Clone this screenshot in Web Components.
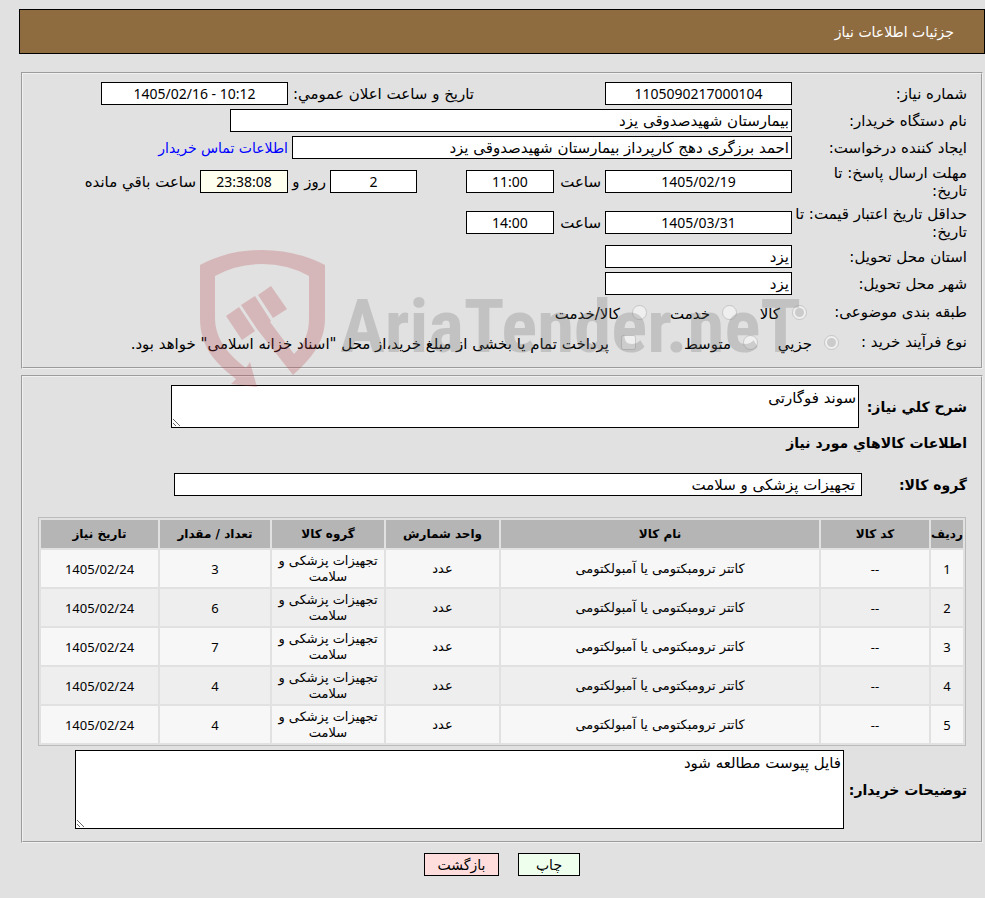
<!DOCTYPE html>
<html lang="fa" dir="rtl">
<head>
<meta charset="utf-8">
<title>جزئیات اطلاعات نیاز</title>
<style>
  body {
    margin: 0;
    background: #e1e1e1;
    color: #000;
    font: 15px/18px "DejaVu Sans", "Noto Sans", sans-serif;
  }
</style>
</head>
<body>
<need-page>
  <need-header>جزئیات اطلاعات نیاز</need-header>

  <need-panel>
    <need-row>
      <need-field label="شماره نیاز:" value="1105090217000104" number></need-field>
      <need-field label="تاریخ و ساعت اعلان عمومي:" value="1405/02/16 - 10:12" number inline style="--label: 182px; margin-right: 127px"></need-field>
    </need-row>
    <need-row>
      <need-field label="نام دستگاه خریدار:" value="بیمارستان شهیدصدوقی یزد" style="--box: 562px"></need-field>
    </need-row>
    <need-row>
      <need-field label="ایجاد کننده درخواست:" value="احمد برزگری دهج کارپرداز بیمارستان شهیدصدوقی یزد" style="--box: 500px"></need-field>
      <need-link href="#contact">اطلاعات تماس خریدار</need-link>
    </need-row>
    <need-row tall>
      <need-field label="مهلت ارسال پاسخ: تا&#10;تاریخ:" value="1405/02/19" number></need-field>
      <need-field label="ساعت" value="11:00" number inline style="--label: 43px; --box: 88px"></need-field>
      <need-field label="روز و" value="2" number inline after style="--label: 34px; --box: 87px; margin-right: 45px"></need-field>
      <need-field label="ساعت باقي مانده" value="23:38:08" number inline after style="--label: 114px; --box: 88px; --paper: #fffff0"></need-field>
    </need-row>
    <need-row tall>
      <need-field label="حداقل تاریخ اعتبار قیمت: تا&#10;تاریخ:" value="1405/03/31" number></need-field>
      <need-field label="ساعت" value="14:00" number inline style="--label: 43px; --box: 88px"></need-field>
    </need-row>
    <need-row>
      <need-field label="استان محل تحویل:" value="یزد"></need-field>
    </need-row>
    <need-row>
      <need-field label="شهر محل تحویل:" value="یزد"></need-field>
    </need-row>
    <need-choices label="طبقه بندی موضوعی:" style="--caption: 160px">
      <need-choice type="radio" label="کالا" checked style="--cell: 70px"></need-choice>
      <need-choice type="radio" label="خدمت" style="--cell: 90px"></need-choice>
      <need-choice type="radio" label="کالا/خدمت"></need-choice>
    </need-choices>
    <need-choices label="نوع فرآیند خرید :" style="--caption: 128px">
      <need-choice type="radio" label="جزيي" checked style="--cell: 81px"></need-choice>
      <need-choice type="radio" label="متوسط" style="--cell: 122px"></need-choice>
      <need-choice type="checkbox" label="پرداخت تمام یا بخشی از مبلغ خرید،از محل &quot;اسناد خزانه اسلامی&quot; خواهد بود."></need-choice>
    </need-choices>
  </need-panel>

  <need-panel>
    <need-note label="شرح کلي نیاز:" value="سوند فوگارتی" style="--label: 104px; --box: 688px; --height: 43px"></need-note>
    <need-title>اطلاعات کالاهاي مورد نیاز</need-title>
    <need-row>
      <need-field label="گروه کالا:" value="تجهیزات پزشکی و سلامت" strong style="--label: 105px; --box: 688px; --indent: 6px"></need-field>
    </need-row>
    <need-items></need-items>
    <need-note label="توضیحات خریدار:" value="فایل پیوست مطالعه شود" style="--label: 119px; --box: 769px; --height: 79px"></need-note>
  </need-panel>

  <need-actions>
    <need-button style="--fill: #eeffee; --width: 62px">چاپ</need-button>
    <need-button style="--fill: #ffdddd; --width: 75px">بازگشت</need-button>
  </need-actions>

  <need-watermark slot="mark"></need-watermark>
</need-page>

<script>
const base = `
  * { box-sizing: border-box; }
  input, textarea, button { font: inherit; color: inherit; margin: 0; }
`;

class NeedElement extends HTMLElement {
  constructor() {
    super();
    this.attachShadow({ mode: "open" });
  }

  connectedCallback() {
    this.shadowRoot.innerHTML = `<style>${base}${this.styles()}</style>${this.markup()}`;
  }

  attr(name) {
    return (this.getAttribute(name) || "").replace(/"/g, "&quot;");
  }

  markup() {
    return "<slot></slot>";
  }
}

customElements.define("need-page", class extends NeedElement {
  styles() {
    return `
      :host { display: block; position: relative; }
      main { padding: 9px 0 20px 19px; }
    `;
  }
  markup() {
    return `<main><slot></slot></main><slot name="mark"></slot>`;
  }
});

customElements.define("need-header", class extends NeedElement {
  styles() {
    return `
      :host { display: block; margin-bottom: 18px; font-size: 14px; }
      header {
        padding: 13px 30px 12px;
        border: 1px solid #000;
        background: #8f6c40;
        color: #fff;
      }
      h1 { margin: 0; font: inherit; }
    `;
  }
  markup() {
    return `<header><h1><slot></slot></h1></header>`;
  }
});

customElements.define("need-panel", class extends NeedElement {
  styles() {
    return `
      :host { display: block; margin: 0 2px 6px; }
      fieldset {
        display: flex;
        flex-direction: column;
        gap: 4px;
        min-width: 0;
        margin: 0;
        padding: 8px 14px 12px;
        border: 2px groove #f0f0f0;
      }
    `;
  }
  markup() {
    return `<fieldset><slot></slot></fieldset>`;
  }
});

customElements.define("need-row", class extends NeedElement {
  styles() {
    return `
      :host { display: flex; align-items: center; gap: 4px; min-height: 23px; }
      :host([tall]) { min-height: 37px; }
    `;
  }
});

// A caption tied to a read-only box; "after" puts the caption behind the box
customElements.define("need-field", class extends NeedElement {
  styles() {
    return `
      :host { display: flex; align-items: center; min-width: 0; }
      :host([inline]) { gap: 4px; }
      label { flex: none; width: var(--label, 175px); white-space: pre-line; }
      :host([inline]) label { white-space: nowrap; }
      :host([strong]) label { font-size: 14px; font-weight: bold; }
      input {
        width: var(--box, 187px);
        min-width: 0;
        height: 23px;
        padding: 0 2px;
        padding-right: var(--indent, 2px);
        border: 1px solid #000;
        border-radius: 0;
        background: var(--paper, #fff);
      }
      :host([number]) input {
        font-family: "Noto Sans", sans-serif;
        font-size: 14px;
        text-align: center;
        direction: ltr;
      }
    `;
  }
  markup() {
    const box = `<input id="box" type="text" value="${this.attr("value")}" readonly>`;
    const label = `<label for="box">${this.attr("label")}</label>`;
    return this.hasAttribute("after") ? box + label : label + box;
  }
});

customElements.define("need-link", class extends NeedElement {
  styles() {
    return `
      :host { font-size: 14px; white-space: nowrap; }
      a { color: #00f; text-decoration: none; }
    `;
  }
  markup() {
    return `<a href="${this.attr("href")}"><slot></slot></a>`;
  }
});

customElements.define("need-choices", class extends NeedElement {
  styles() {
    return `
      :host { display: block; }
      div { display: flex; align-items: center; min-height: 26px; }
      span { flex: none; width: var(--caption); }
    `;
  }
  markup() {
    return `
      <div role="group" aria-labelledby="caption">
        <span id="caption">${this.attr("label")}</span>
        <slot></slot>
      </div>`;
  }
});

customElements.define("need-choice", class extends NeedElement {
  styles() {
    return `
      :host { display: flex; align-items: center; gap: 12px; width: var(--cell, auto); white-space: nowrap; }
      input { flex: none; width: 15px; height: 15px; }
      label { padding-top: 4px; }
    `;
  }
  markup() {
    const checked = this.hasAttribute("checked") ? "checked" : "";
    return `
      <input id="box" type="${this.attr("type")}" ${checked} disabled>
      <label for="box">${this.attr("label")}</label>`;
  }
});

customElements.define("need-note", class extends NeedElement {
  styles() {
    return `
      :host { display: flex; align-items: center; gap: 4px; }
      label {
        flex: none;
        width: var(--label);
        font-size: 14px;
        font-weight: bold;
        white-space: nowrap;
      }
      textarea {
        width: var(--box);
        min-width: 0;
        height: var(--height);
        padding: 3px 2px;
        border: 1px solid #000;
        background: #fff;
      }
    `;
  }
  markup() {
    return `
      <label for="text">${this.attr("label")}</label>
      <textarea id="text" readonly>${this.attr("value")}</textarea>`;
  }
});

customElements.define("need-title", class extends NeedElement {
  styles() {
    return `
      :host { display: block; margin: 2px 0 17px; }
      h2 { margin: 0; font-size: 14px; }
    `;
  }
  markup() {
    return `<h2><slot></slot></h2>`;
  }
});

const columns = [
  ["ردیف", "32px"],
  ["کد کالا", "108px"],
  ["نام کالا", ""],
  ["واحد شمارش", "113px"],
  ["گروه کالا", "112px"],
  ["تعداد / مقدار", "110px"],
  ["تاریخ نیاز", "117px"],
];
const amounts = [3, 6, 7, 4, 4];

customElements.define("need-items", class extends NeedElement {
  styles() {
    return `
      :host { display: block; margin: 17px 1px 0; font-size: 13px; line-height: 16px; }
      table {
        width: 100%;
        table-layout: fixed;
        border: 1px solid #bbb;
        border-spacing: 2px;
      }
      th, td { padding: 0; text-align: center; }
      th { height: 28px; background: #b5b5b5; font-size: 12px; white-space: nowrap; }
      td { height: 37px; background: #f7f7f7; }
      tr:nth-child(even) td { background: #eee; }
      .number { font-family: "Noto Sans", sans-serif; }
    `;
  }
  markup() {
    const head = columns.map(([name, width]) =>
      `<th scope="col"${width && ` style="width: ${width}"`}>${name}</th>`).join("");
    const rows = amounts.map((amount, i) => `
      <tr>
        <td class="number">${i + 1}</td>
        <td class="number">--</td>
        <td>کاتتر ترومبکتومی یا آمبولکتومی</td>
        <td>عدد</td>
        <td>تجهیزات پزشکی و سلامت</td>
        <td class="number">${amount}</td>
        <td class="number">1405/02/24</td>
      </tr>`).join("");
    return `<table><thead><tr>${head}</tr></thead><tbody>${rows}</tbody></table>`;
  }
});

customElements.define("need-actions", class extends NeedElement {
  styles() {
    return `:host { display: flex; justify-content: center; gap: 19px; padding-top: 4px; font-size: 14px; }`;
  }
});

customElements.define("need-button", class extends NeedElement {
  styles() {
    return `
      :host { display: block; }
      button {
        display: block;
        width: var(--width);
        height: 23px;
        padding: 0;
        border: 1px solid #000;
        background: var(--fill);
      }
    `;
  }
  markup() {
    return `<button type="button"><slot></slot></button>`;
  }
});

// Translucent logo laid over the form
customElements.define("need-watermark", class extends NeedElement {
  styles() {
    return `
      :host {
        position: absolute;
        top: 250px;
        left: 200px;
        opacity: 0.25;
        pointer-events: none;
      }
      svg { display: block; }
      text { font: bold 75px "Liberation Sans Narrow", "Roboto Condensed", "Liberation Sans", sans-serif; }
    `;
  }
  markup() {
    return `
      <svg width="620" height="138" viewBox="0 0 620 138" direction="ltr">
        <g fill="#b93d45">
          <path d="M0 15Q28 0 62 0T125 15V68C125 92 112 108 93 125L57 79L41 55L55 46L71 71L70 72L94 104C104 94 109 84 109 68V26Q88 14 62 14T15 26V68C15 90 30 106 46 118L50 112L57 137L31 134L36 129C14 112 0 96 0 68Z"/>
          <path d="M26 66L39 57L55 81L42 90ZM58 45L71 36L87 59L73 68Z"/>
        </g>
        <text x="140" y="102" fill="#696969">AriaTender.neT</text>
      </svg>`;
  }
});
</script>
</body>
</html>
